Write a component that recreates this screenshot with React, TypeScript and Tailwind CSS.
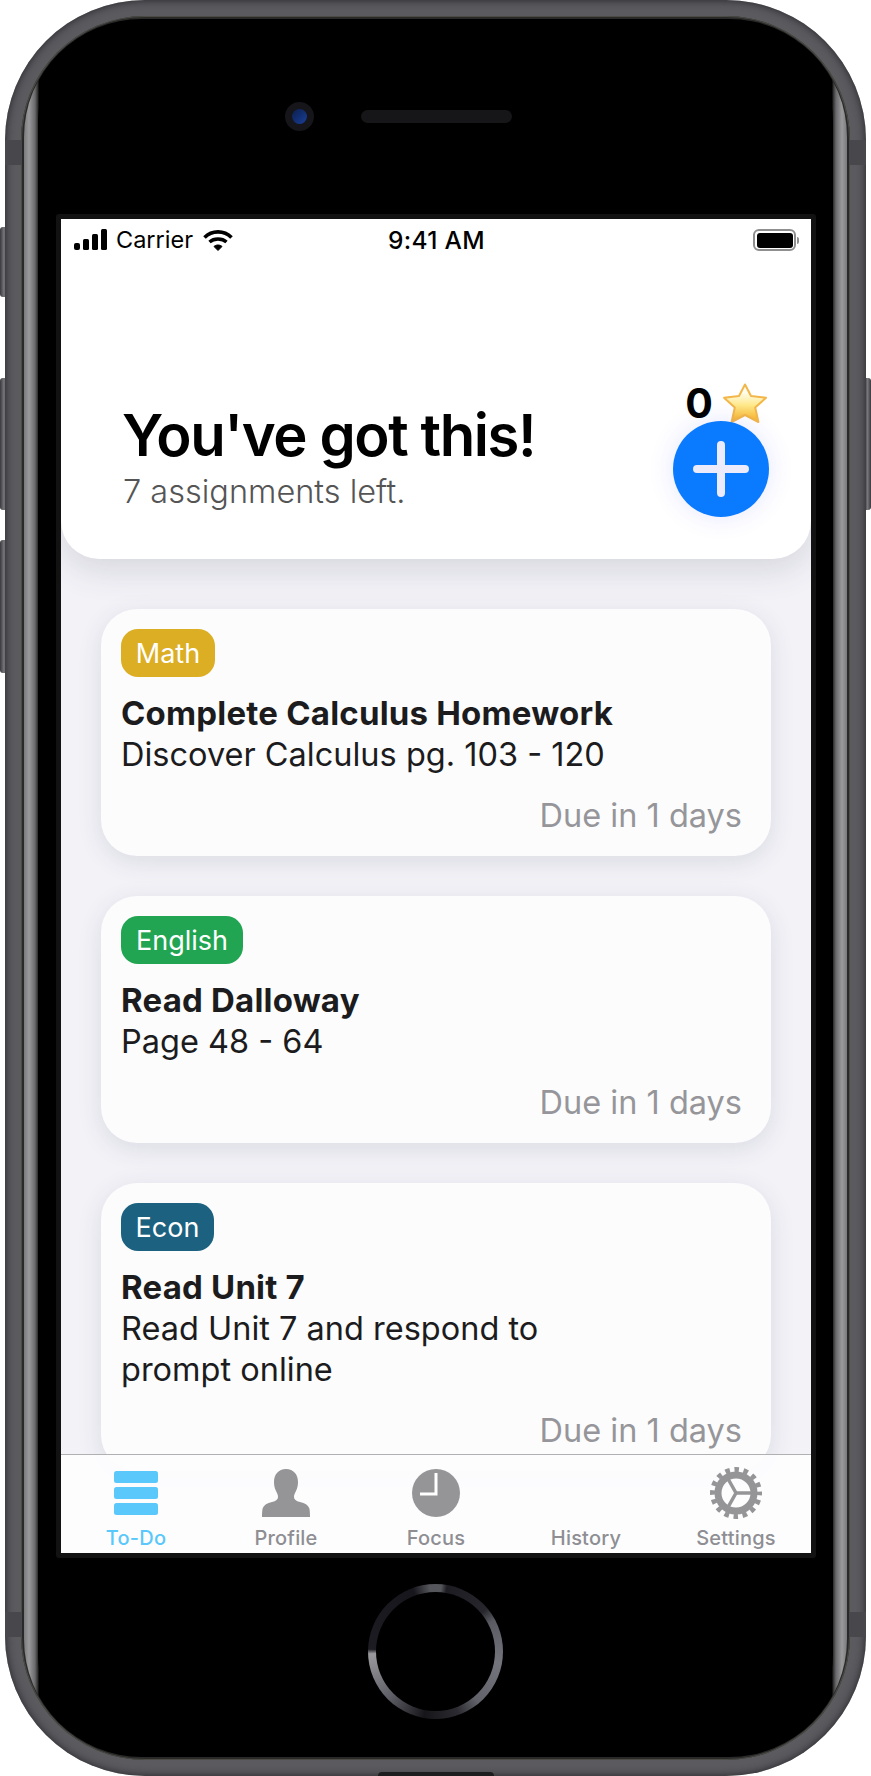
const sans = "font-['Inter',sans-serif]"

const CARDS = [
  { tag: 'Math', color: 'bg-[#dcae24]', w: 'w-[94px]', title: 'Complete Calculus Homework', lines: ['Discover Calculus pg. 103 - 120'], h: 'h-[247px]' },
  { tag: 'English', color: 'bg-[#21a552]', w: 'w-[122px]', title: 'Read Dalloway', lines: ['Page 48 - 64'], h: 'h-[247px]' },
  { tag: 'Econ', color: 'bg-[#1c6280]', w: 'w-[93px]', title: 'Read Unit 7', lines: ['Read Unit 7 and respond to', 'prompt online'], h: 'h-[288px]' },
]

function Star() {
  return (
    <svg width="46" height="42" viewBox="0 0 46 42" className="shrink-0">
      <defs>
        <linearGradient id="star" x1="0" y1="0" x2="0" y2="1">
          <stop offset="0.2" stopColor="#fffdf0" />
          <stop offset="0.55" stopColor="#ffe98a" />
          <stop offset="1" stopColor="#f9ae1c" />
        </linearGradient>
      </defs>
      <path
        d="M23 2.500l6 11.500 15 1.800-10.800 9.700 3.200 14.500L23 33l-13.400 7 3.200-14.500L2 15.800l15-1.800z"
        fill="url(#star)"
        stroke="#f3b649"
        strokeWidth="2"
        strokeLinejoin="round"
      />
    </svg>
  )
}

function StatusBar() {
  return (
    <div className="flex h-[42px] items-center justify-between pl-[13px] pr-[12px] text-black">
      <div className="flex w-[300px] items-center">
        <svg width="33" height="22" viewBox="0 0 33 22" fill="#000">
          <rect x="0" y="14" width="6" height="7" rx="2" />
          <rect x="9" y="10" width="6" height="11" rx="1.500" />
          <rect x="18" y="5" width="6" height="16" rx="1.500" />
          <rect x="27" y="0" width="6" height="21" rx="1.500" />
        </svg>
        <span className={`${sans} ml-[9px] text-[23.500px] leading-none`}>Carrier</span>
        <svg width="30" height="22" viewBox="0 0 30 22" fill="none" stroke="#000" className="ml-[10px]">
          <path d="M1.500 8.500C9 1 21 1 28.500 8.500" strokeWidth="3.600" />
          <path d="M6.500 13C11 9 19 9 23.500 13" strokeWidth="3.400" />
          <path d="M11 17.500C13 15.500 17 15.500 19 17.500L15 21.500Z" fill="#000" strokeWidth="1" />
        </svg>
      </div>
      <span className={`${sans} text-[24.500px] font-medium leading-none tracking-[0.3px]`}>9:41 AM</span>
      <div className="flex w-[300px] items-center justify-end">
        <div className="flex h-[22px] w-[43px] items-center justify-center rounded-[6px] border-[2px] border-[#8f8f8f]">
          <div className="h-[15px] w-[36px] rounded-[3px] bg-black" />
        </div>
        <div className="ml-[1px] h-[7px] w-[2px] rounded-r-sm bg-[#8f8f8f]" />
      </div>
    </div>
  )
}

function Header() {
  return (
    <div className="relative z-10 h-[340px] shrink-0 rounded-b-[38px] bg-white shadow-[0_10px_34px_rgba(60,60,90,0.16)]">
      <StatusBar />
      <div className={`${sans} pl-[62px] pt-[143px]`}>
        <h1 className="-ml-[1px] text-[58px] font-semibold leading-[62px] tracking-[-1.400px] text-black">You've got this!</h1>
        <p className="mt-[6px] text-[32.500px] font-light leading-[40px] text-[#555]">7 assignments left.</p>
      </div>
      <div className="absolute right-[42px] top-[163px] w-[96px]">
        <div className="flex h-[42px] items-start justify-end pr-[1px]">
          <span className={`${sans} -mt-[2px] mr-[9px] text-[41px] font-bold leading-[46px] text-black`}>0</span>
          <Star />
        </div>
        <div className="relative -mt-[3px] flex h-[96px] w-[96px] items-center justify-center rounded-full bg-[#0a7bff] shadow-[0_0_26px_rgba(70,80,255,0.14)]">
          <svg width="56" height="56" viewBox="0 0 56 56" stroke="#ebebfb" strokeWidth="8" strokeLinecap="round">
            <path d="M28 4v48M4 28h48" />
          </svg>
        </div>
      </div>
    </div>
  )
}

function Card({ tag, color, w, title, lines, h }: (typeof CARDS)[number]) {
  return (
    <div className={`${h} ${sans} flex shrink-0 flex-col rounded-[36px] bg-[#fcfcfd] pl-[20px] pr-[29px] pt-[20px] shadow-[0_6px_24px_rgba(60,60,90,0.12)]`}>
      <div className={`${color} ${w} flex h-[48px] items-center justify-center rounded-[17px] text-[27px] leading-none text-white`}>{tag}</div>
      <p className="mb-[1px] mt-[16px] text-[33px] font-bold leading-[40px] tracking-[0.2px] text-[#1c1c1e]">{title}</p>
      {lines.map(line => (
        <p key={line} className="text-[32.500px] leading-[41px] text-[#1c1c1e]">{line}</p>
      ))}
      <p className="mt-auto pb-[20px] text-right text-[32.500px] leading-[40px] text-[#96969a]">Due in 1 days</p>
    </div>
  )
}

function TabIcon({ name }: { name: string }) {
  if (name === 'To-Do') {
    return (
      <svg width="44" height="44" viewBox="0 0 44 44" fill="#5ac8fa">
        <rect x="0" y="0" width="44" height="12" rx="2.500" />
        <rect x="0" y="16" width="44" height="12" rx="2.500" />
        <rect x="0" y="32" width="44" height="12" rx="2.500" />
      </svg>
    )
  }
  if (name === 'Profile') {
    return (
      <svg width="48" height="48" viewBox="0 0 48 48" fill="#959598">
        <path d="M24 0c7.500 0 12 5.500 12 13 0 3-.5 6-2 9-1.300 2.600-2 4-2 6 0 2.500 2 4 6 5 5 1.200 8 3 9.200 6 .6 1.800.8 5 .8 9H0c0-4 .2-7.200.8-9 1.200-3 4.200-4.800 9.200-6 4-1 6-2.500 6-5 0-2-.7-3.400-2-6-1.500-3-2-6-2-9 0-7.500 4.500-13 12-13z" />
      </svg>
    )
  }
  if (name === 'Focus') {
    return (
      <svg width="48" height="48" viewBox="0 0 48 48">
        <circle cx="24" cy="24" r="24" fill="#959598" />
        <path d="M24 4v21H8" fill="none" stroke="#fff" strokeWidth="3" />
      </svg>
    )
  }
  if (name === 'Settings') {
    return (
      <svg width="52" height="52" viewBox="0 0 52 52" fill="none" stroke="#959598">
        <circle cx="26" cy="26" r="18" strokeWidth="7" />
        <circle cx="26" cy="26" r="23.500" strokeWidth="5" strokeDasharray="4.600 4.628" strokeDashoffset="2.300" />
        <path d="M26 26h18M26 26L17 10M26 26L17 42" strokeWidth="3.500" />
      </svg>
    )
  }
  return null
}

function TabBar() {
  const tabs = [
    { name: 'To-Do', color: 'text-[#5ac8fa]' },
    { name: 'Profile', color: 'text-[#8e8e93]' },
    { name: 'Focus', color: 'text-[#8e8e93]' },
    { name: 'History', color: 'text-[#8e8e93]' },
    { name: 'Settings', color: 'text-[#8e8e93]' },
  ]
  return (
    <div className="absolute inset-x-0 bottom-0 z-20 grid h-[99px] grid-cols-5 border-t border-[#b0b0b2] bg-[#fdfdfe]/95 pt-[12px]">
      {tabs.map(tab => (
        <div key={tab.name} className="flex flex-col items-center">
          <div className="flex h-[52px] items-center justify-center"><TabIcon name={tab.name} /></div>
          <span className={`${sans} ${tab.color} mt-[7px] text-[20px] font-medium leading-[24px] tracking-[0.2px]`}>{tab.name}</span>
        </div>
      ))}
    </div>
  )
}

function SideButton({ className }: { className: string }) {
  return <div className={`absolute w-[8px] rounded-l-[3px] bg-gradient-to-r from-[#3a3a3e] via-[#77777c] to-[#2e2e32] ${className}`} />
}

export default function App() {
  return (
    <div className="relative h-[1776px] w-[871px] overflow-hidden bg-white">
      <SideButton className="left-0 top-[227px] h-[70px]" />
      <SideButton className="left-0 top-[378px] h-[132px]" />
      <SideButton className="left-0 top-[540px] h-[133px]" />
      <div className="absolute right-0 top-[378px] h-[132px] w-[7px] rounded-r-[3px] bg-gradient-to-l from-[#3a3a3e] via-[#77777c] to-[#2e2e32]" />

      <div className="relative mx-[5px] h-full rounded-[140px] bg-[#5a5a5f] p-[16px] shadow-[inset_0_0_8px_#222226]">
        <div className="h-full rounded-[124px] bg-[#29292a] p-[3px] shadow-[inset_0_0_0_1px_#4c4c44]">
          <div className="h-full rounded-[118px] bg-[linear-gradient(90deg,#7a7a7c_0,#9a9a9c_5px,#6a6a6c_11px,#2a2a2a_14px,#000_15px,#000_calc(100%-15px),#2a2a2a_calc(100%-14px),#6a6a6c_calc(100%-11px),#9a9a9c_calc(100%-5px),#7a7a7c_100%)] pt-[1px]">
            <div className="mx-[14px] h-[calc(100%-1px)] rounded-[102px] bg-black">
              <div className="relative h-full">
                <div className="absolute left-[247px] top-[82px] flex h-[29px] w-[29px] items-center justify-center rounded-full bg-[#15151a]">
                  <div className="h-[15px] w-[15px] rounded-full bg-gradient-to-br from-[#0c1f4c] to-[#1a3f9a]" />
                </div>
                <div className="absolute left-[323px] top-[90px] h-[13px] w-[151px] rounded-full bg-[#161618]" />

                <div className="absolute left-[330px] top-[1564px] h-[135px] w-[135px] rounded-full bg-[conic-gradient(#55555c_0deg,#55555c_5deg,#1c1c22_10deg,#26262c_50deg,#5a5a62_62deg,#74747c_100deg,#62626a_140deg,#2a2a30_160deg,#16161a_190deg,#5e5e66_225deg,#9a9a9e_268deg,#1c1c22_272deg,#16161c_340deg,#55555c_355deg)] p-[8px]">
                  <div className="h-full w-full rounded-full bg-black" />
                </div>

                <div className="absolute left-[18px] top-[194px] h-[1344px] w-[760px] rounded-[3px] bg-[#121212] p-[5px]">
                  <div className="relative flex h-[1334px] flex-col overflow-hidden bg-[#f2f2f7]">
                    <Header />
                    <div className="flex flex-col gap-[40px] px-[40px] pt-[50px]">
                      {CARDS.map(card => <Card key={card.tag} {...card} />)}
                    </div>
                    <TabBar />
                  </div>
                </div>
              </div>
            </div>
          </div>
        </div>
        <div className="absolute left-0 top-[140px] h-[25px] w-[17px] bg-[#47474c]" />
        <div className="absolute right-0 top-[140px] h-[25px] w-[17px] bg-[#47474c]" />
        <div className="absolute left-0 top-[1612px] h-[25px] w-[17px] bg-[#47474c]" />
        <div className="absolute right-0 top-[1612px] h-[25px] w-[17px] bg-[#47474c]" />
      </div>
      <div className="absolute bottom-0 left-[378px] h-[4px] w-[116px] rounded-t-[8px] bg-[#1d1d1f]" />
    </div>
  )
}
